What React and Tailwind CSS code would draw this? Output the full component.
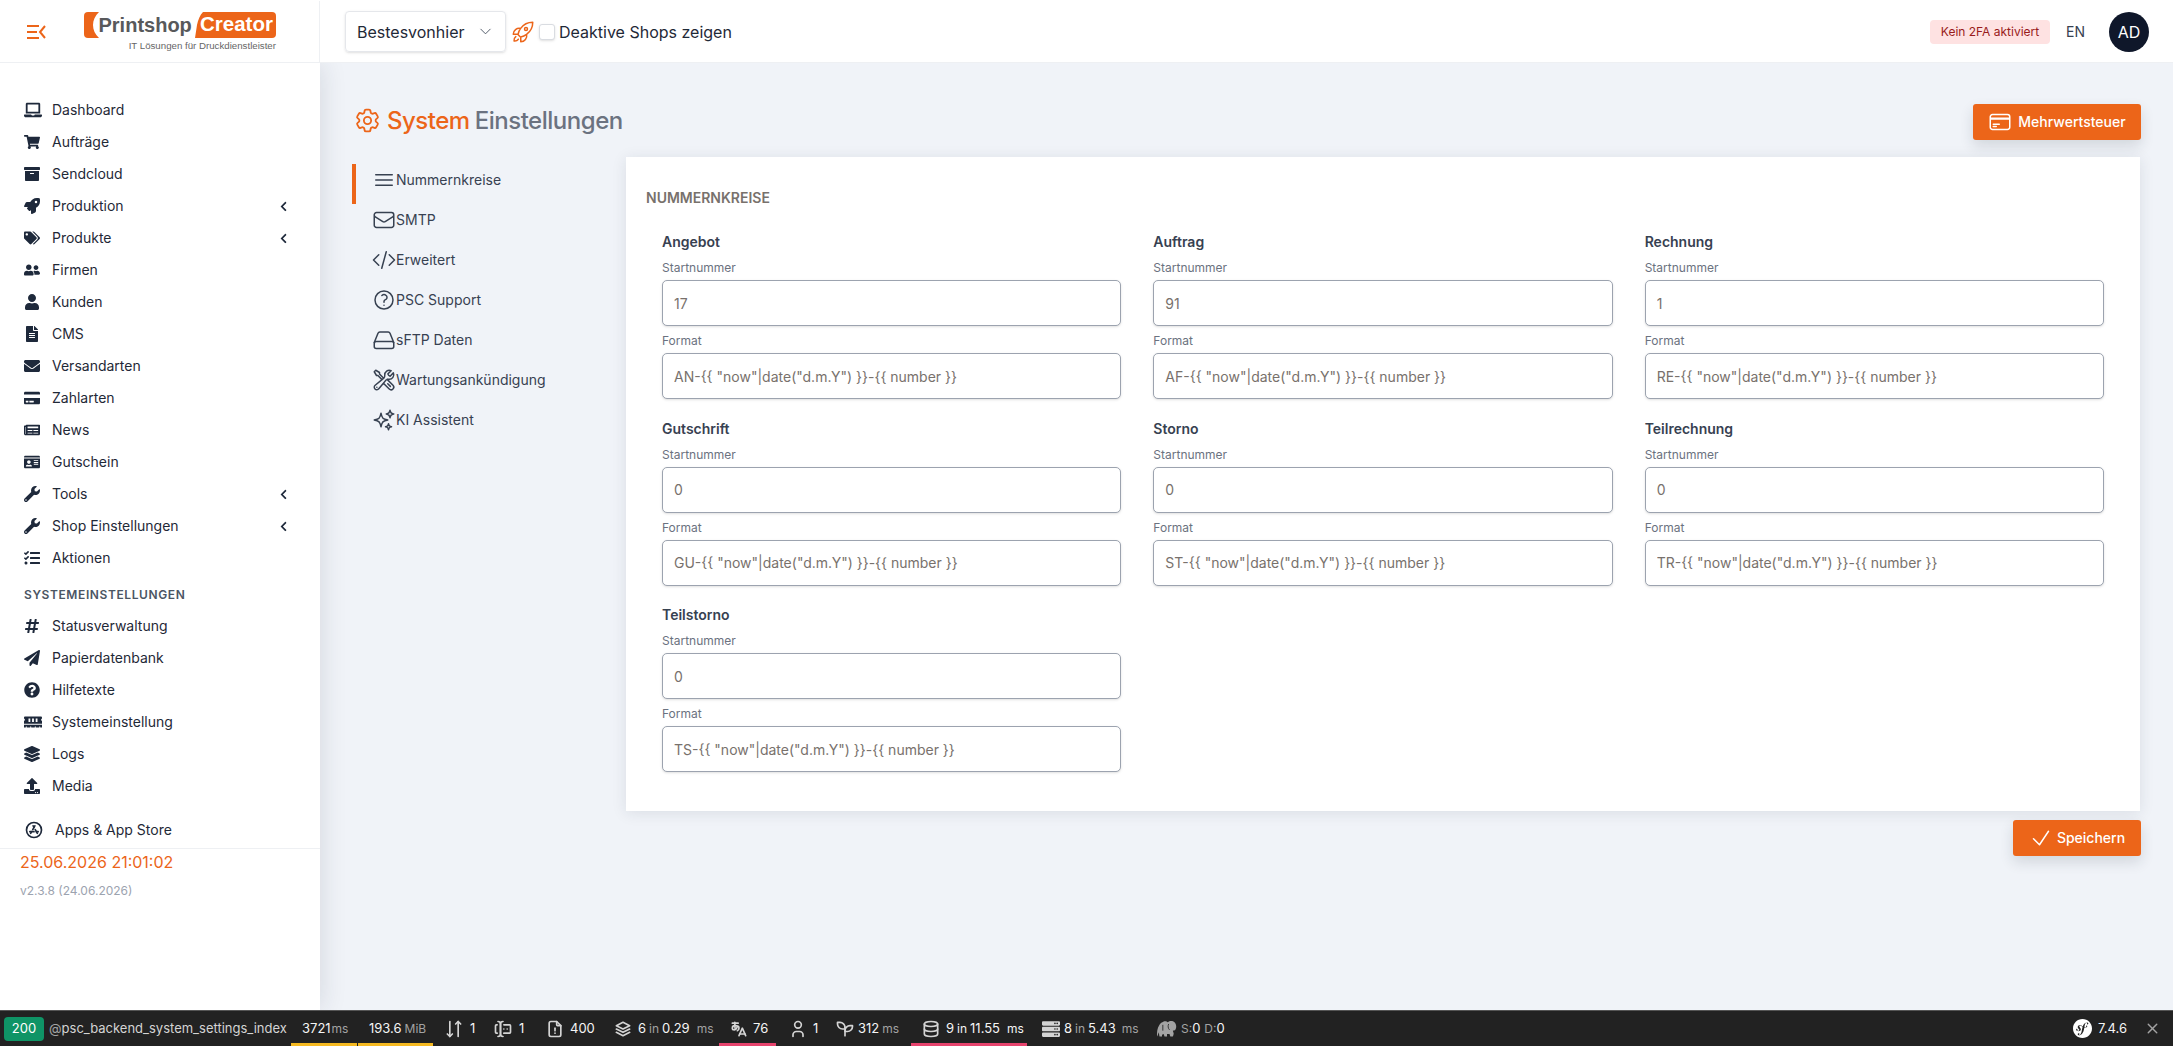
import React from 'react';
import {
  FaLaptop, FaShoppingCart, FaArchive, FaRocket, FaTags, FaUserFriends, FaUser, FaFileAlt, FaEnvelope,
  FaCreditCard, FaNewspaper, FaIdCard, FaWrench, FaTasks, FaHashtag, FaPaperPlane, FaQuestionCircle,
  FaMemory, FaLayerGroup, FaUpload, FaChevronLeft, FaServer,
} from 'react-icons/fa';
import {
  HiOutlineBars3, HiOutlineEnvelope, HiOutlineCodeBracket, HiOutlineQuestionMarkCircle,
  HiOutlineWrenchScrewdriver, HiOutlineSparkles, HiOutlineCog6Tooth, HiOutlineRocketLaunch,
  HiOutlineCreditCard, HiOutlineCheck, HiOutlineChevronDown,
} from 'react-icons/hi2';
import {
  TbBrandAppstore, TbArrowsDownUp, TbForms, TbFileAlert, TbStack2, TbLanguageHiragana, TbUser,
  TbSeeding, TbDatabase, TbX,
} from 'react-icons/tb';
import { SiSymfony } from 'react-icons/si';

const menu = [
  { icon: FaLaptop, label: 'Dashboard', size: 18 },
  { icon: FaShoppingCart, label: 'Aufträge' },
  { icon: FaArchive, label: 'Sendcloud' },
  { icon: FaRocket, label: 'Produktion', sub: true },
  { icon: FaTags, label: 'Produkte', sub: true },
  { icon: FaUserFriends, label: 'Firmen' },
  { icon: FaUser, label: 'Kunden' },
  { icon: FaFileAlt, label: 'CMS' },
  { icon: FaEnvelope, label: 'Versandarten' },
  { icon: FaCreditCard, label: 'Zahlarten' },
  { icon: FaNewspaper, label: 'News' },
  { icon: FaIdCard, label: 'Gutschein' },
  { icon: FaWrench, label: 'Tools', sub: true },
  { icon: FaWrench, label: 'Shop Einstellungen', sub: true },
  { icon: FaTasks, label: 'Aktionen' },
];

const systemMenu = [
  { icon: FaHashtag, label: 'Statusverwaltung' },
  { icon: FaPaperPlane, label: 'Papierdatenbank' },
  { icon: FaQuestionCircle, label: 'Hilfetexte' },
  { icon: FaMemory, label: 'Systemeinstellung', size: 18 },
  { icon: FaLayerGroup, label: 'Logs' },
  { icon: FaUpload, label: 'Media' },
];

const DriveIcon = (props) => (
  <svg viewBox="0 0 24 24" fill="none" stroke="currentColor" strokeWidth="1.5" strokeLinejoin="round" strokeLinecap="round" {...props}>
    <path d="M2.25 14.5 6 5.2A2 2 0 0 1 7.9 4h8.2A2 2 0 0 1 18 5.2l3.75 9.3" />
    <rect x="2.25" y="13.5" width="19.5" height="7" rx="2" />
  </svg>
);

const tabs = [
  { icon: HiOutlineBars3, label: 'Nummernkreise', active: true },
  { icon: HiOutlineEnvelope, label: 'SMTP' },
  { icon: HiOutlineCodeBracket, label: 'Erweitert' },
  { icon: HiOutlineQuestionMarkCircle, label: 'PSC Support' },
  { icon: DriveIcon, label: 'sFTP Daten' },
  { icon: HiOutlineWrenchScrewdriver, label: 'Wartungsankündigung' },
  { icon: HiOutlineSparkles, label: 'KI Assistent' },
];

const circles = [
  { title: 'Angebot', start: '17', prefix: 'AN' },
  { title: 'Auftrag', start: '91', prefix: 'AF' },
  { title: 'Rechnung', start: '1', prefix: 'RE' },
  { title: 'Gutschrift', start: '0', prefix: 'GU' },
  { title: 'Storno', start: '0', prefix: 'ST' },
  { title: 'Teilrechnung', start: '0', prefix: 'TR' },
  { title: 'Teilstorno', start: '0', prefix: 'TS' },
];

const MenuToggle = () => (
  <svg viewBox="0 0 19 14" className="h-[14px] w-[19px] text-[#ec6519]" fill="none" stroke="currentColor" strokeWidth="2">
    <path d="M0 1h12M0 7h10M0 13h12M18 1l-5 6 5 6" />
  </svg>
);

const Logo = () => (
  <div className="ml-[38px] flex w-[192px] flex-col pt-px">
    <svg viewBox="0 0 192 26" className="h-[26px] w-[192px]">
      <rect width="192" height="26" rx="4" fill="#ec6519" />
      <path d="M15 0h104c-3 3-5 8-6 13l-2 13H15c-4-4-6-8-6-13s2-9 6-13z" fill="#fff" />
      <text x="14.5" y="19.5" fontFamily="Liberation Sans, sans-serif" fontWeight="700" fontSize="20" fill="#58595b">Printshop</text>
      <text x="116" y="19" fontFamily="Liberation Sans, sans-serif" fontWeight="700" fontSize="20.5" fill="#fff">Creator</text>
    </svg>
    <span className="mt-[1px] text-right font-['Liberation_Sans',sans-serif] text-[9.7px] leading-[13px] text-[#666]">IT Lösungen für Druckdienstleister</span>
  </div>
);

const Header = () => (
  <header className="relative z-20 flex h-[63px] shrink-0 items-center border-b border-[#eef0f3] bg-white pt-px">
    <div className="flex h-full w-[320px] shrink-0 items-center border-r border-[#eef0f3] pl-[27px]">
      <MenuToggle />
      <Logo />
    </div>
    <div className="ml-[25px] flex h-[41px] w-[161px] items-center justify-between rounded border border-[#e5e7eb] pl-[11px] pr-3 text-base text-[#1f2937] shadow-sm">
      Bestesvonhier
      <HiOutlineChevronDown className="text-[#4b5563]" size={15} />
    </div>
    <HiOutlineRocketLaunch className="ml-[5px] text-[#ec6519]" size={24} />
    <span className="ml-[4px] h-4 w-4 rounded-[3px] border border-[#d9dce1] bg-white shadow-sm" />
    <span className="ml-1 text-base text-[#1f2937]">Deaktive Shops zeigen</span>
    <div className="ml-auto flex items-center pr-6">
      <span className="flex h-[24px] w-[120px] items-center justify-center rounded bg-[#fee2e2] text-xs text-[#991b1b]">Kein 2FA aktiviert</span>
      <span className="ml-4 text-sm text-[#374151]">EN</span>
      <span className="ml-6 flex h-10 w-10 items-center justify-center rounded-full bg-[#0f172a] text-base text-white">AD</span>
    </div>
  </header>
);

const MenuRow = ({ icon: Icon, label, sub, size = 16 }) => (
  <div className="flex h-8 items-center pl-6 pr-[31px] text-sm text-[#1f2937]">
    <span className="flex w-7 shrink-0 items-center">
      <Icon size={size} className="text-[#1e293b]" />
    </span>
    {label}
    {sub && <FaChevronLeft size={11} className="ml-auto text-[#1e293b]" />}
  </div>
);

const Sidebar = () => (
  <aside className="relative z-10 flex w-[320px] shrink-0 flex-col bg-white pt-[31px] shadow-[2px_0_24px_rgba(30,41,59,0.12)]">
    {menu.map((item) => <MenuRow key={item.label} {...item} />)}
    <div className="flex h-9 items-center pl-6 pt-[5px] text-xs font-semibold uppercase tracking-wider text-[#4b5563]">Systemeinstellungen</div>
    {systemMenu.map((item) => <MenuRow key={item.label} {...item} />)}
    <div className="mt-3 flex h-8 items-center pl-6 text-sm text-[#1f2937]">
      <TbBrandAppstore size={20} className="mr-[11px] text-[#1e293b]" />
      Apps &amp; App Store
    </div>
    <div className="mt-[2px] border-t border-[#eef0f3] pl-5">
      <div className="mt-[1px] text-base leading-6 text-[#ec6519]">25.06.2026 21:01:02</div>
      <div className="mt-[9px] text-xs text-[#9ca3af]">v2.3.8 (24.06.2026)</div>
    </div>
  </aside>
);

const Field = ({ label, value }) => (
  <div className="flex flex-col">
    <label className="mb-1 text-xs leading-4 text-[#6b7280]">{label}</label>
    <input
      readOnly
      value={value}
      className="h-[46px] w-full rounded-[5px] border border-[#9ca3af] bg-white px-[11px] text-sm text-[#78716c] shadow-sm outline-none"
    />
  </div>
);

const CircleGroup = ({ title, start, prefix }) => (
  <div className="flex flex-col">
    <h3 className="mb-2 text-sm font-semibold leading-5 text-[#374151]">{title}</h3>
    <Field label="Startnummer" value={start} />
    <div className="mt-[7px]">
      <Field label="Format" value={`${prefix}-{{ "now"|date("d.m.Y") }}-{{ number }}`} />
    </div>
  </div>
);

const OrangeButton = ({ icon: Icon, size, gap, className, children }) => (
  <button className={`flex h-9 items-center justify-center rounded-[3px] bg-[#ec6519] text-sm font-medium text-white shadow-[0_6px_14px_rgba(30,41,59,0.14)] ${className}`}>
    <Icon size={size} className={gap} />
    {children}
  </button>
);

const Main = () => (
  <main className="flex min-w-0 flex-1 flex-col bg-[#f0f3f8] pl-8 pr-8 pt-[41px]">
    <div className="mb-[17px] flex h-9 items-center justify-between">
      <h1 className="flex items-center pb-[3px] text-2xl font-medium tracking-[-0.02em]">
        <HiOutlineCog6Tooth size={29} className="ml-px mr-[5px] text-[#ec6519]" />
        <span className="text-[#ec6519]">System</span>
        <span className="ml-[5px] text-[#6b7280]">Einstellungen</span>
      </h1>
      <OrangeButton icon={HiOutlineCreditCard} size={24} gap="mr-[6px]" className="w-[168px]">Mehrwertsteuer</OrangeButton>
    </div>
    <div className="flex">
      <nav className="w-[274px] shrink-0 pt-[7px]">
        {tabs.map(({ icon: Icon, label, active }) => (
          <div key={label} className={`flex h-10 items-center border-l-4 pb-2 pl-4 text-sm text-[#374151] ${active ? 'border-[#ec6519]' : 'border-transparent'}`}>
            <Icon className="h-6 w-6 shrink-0" />
            {label}
          </div>
        ))}
      </nav>
      <section className="mr-px min-w-0 flex-1 bg-white px-5 pb-[39px] pt-[31px] shadow-[0_2px_14px_rgba(30,41,59,0.1)]">
        <h2 className="mb-6 text-sm font-semibold uppercase leading-5 text-[#78716c]">Nummernkreise</h2>
        <div className="grid grid-cols-3 gap-x-8 gap-y-[19.5px] px-4">
          {circles.map((c) => <CircleGroup key={c.title} {...c} />)}
        </div>
      </section>
    </div>
    <div className="mt-[9px] flex justify-end">
      <OrangeButton icon={HiOutlineCheck} size={24} gap="mr-[4px]" className="w-[128px]">Speichern</OrangeButton>
    </div>
  </main>
);

const Unit = ({ children, className = '' }) => (
  <span className={`text-xs text-[#a3a3a3] ${className}`}>{children}</span>
);

const ElephantIcon = () => (
  <svg viewBox="0 0 24 20" className="h-5 w-5 text-[#a3a3a3]" fill="currentColor">
    <path d="M8 1c2-1 4 0 5 1 2-2 6-2 8 0 2 2 3 6 1 9-1 1-2 1-3 1l1 3c0 2-1 4-1 4h-3l-1-3h-3v3H9l-1-3-2 1v2H3l-1-5c-1 3-1 4-2 5 0-5 0-10 3-14 1-2 3-3 5-4z" />
    <path d="M14 4c-1 2-1 5 1 7M7 5v7" fill="none" stroke="#222" strokeWidth="1" />
  </svg>
);

const Block = ({ className = '', line, children }) => (
  <div className={`relative flex h-full shrink-0 items-center ${className}`}>
    {children}
    {line && <span className={`absolute bottom-0 left-0 right-0 h-[3px] ${line}`} />}
  </div>
);

const Toolbar = () => (
  <footer className="z-20 flex h-9 shrink-0 items-center border-t border-[#555] bg-[#222] text-[13px] text-[#f5f5f5]">
    <span className="ml-1 flex h-6 w-10 items-center justify-center rounded bg-[#0f9466] text-white">200</span>
    <span className="ml-[5px] w-[242px] shrink-0 whitespace-nowrap text-[13px] text-[#d4d4d4]"><span className="text-[#a3a3a3]">@</span>psc_backend_system_settings_index</span>
    <Block className="w-[66px] pl-[11px]" line="bg-[#f5b921]">3721<Unit className="ml-px">ms</Unit></Block>
    <Block className="ml-px w-[75px] pl-[11px]" line="bg-[#f5b921]">193.6<Unit className="ml-[3px]">MiB</Unit></Block>
    <Block className="ml-[2px] w-[49px] pl-[9px]"><TbArrowsDownUp size={20} className="mr-[6px] text-[#d4d4d4]" />1</Block>
    <Block className="w-[52px] pl-[9px]"><TbForms size={20} className="mr-[6px] text-[#d4d4d4]" />1</Block>
    <Block className="w-[67px] pl-[9px]"><TbFileAlert size={20} className="mr-[5px] text-[#d4d4d4]" />400</Block>
    <Block className="w-[116px] pl-[10px]"><TbStack2 size={20} className="mr-[5px] text-[#d4d4d4]" />6<Unit className="mx-[3px]">in</Unit>0.29<Unit className="ml-[7px]">ms</Unit></Block>
    <Block className="w-[57px] pl-[10px]" line="bg-[#e6436d]"><TbLanguageHiragana size={20} className="mr-[4px] text-[#d4d4d4]" />76</Block>
    <Block className="ml-[12px] w-[44px]"><TbUser size={20} className="mr-[5px] text-[#d4d4d4]" />1</Block>
    <Block className="ml-[3px] w-[76px]"><TbSeeding size={20} className="mr-[3px] text-[#d4d4d4]" />312<Unit className="ml-[3px]">ms</Unit></Block>
    <Block className="w-[116px] pl-[10px]" line="bg-[#e6436d]"><TbDatabase size={20} className="mr-[5px] text-[#d4d4d4]" />9<Unit className="mx-[3px] text-[#f5f5f5]">in</Unit>11.55<Unit className="ml-[7px] text-[#f5f5f5]">ms</Unit></Block>
    <Block className="ml-[4px] w-[115px] pl-[11px]"><FaServer size={18} className="mr-[4px] text-[#d4d4d4]" />8<Unit className="mx-[3px]">in</Unit>5.43<Unit className="ml-[6px]">ms</Unit></Block>
    <Block className="pl-[11px]"><ElephantIcon /><Unit className="ml-[4px]">S:</Unit>0<Unit className="ml-[4px]">D:</Unit>0</Block>
    <div className="ml-auto flex items-center pr-3">
      <SiSymfony size={19} className="text-white" />
      <span className="ml-[6px]">7.4.6</span>
      <TbX size={17} className="ml-[17px] text-[#a3a3a3]" />
    </div>
  </footer>
);

export default function App() {
  return (
    <div className="flex h-screen w-full flex-col overflow-hidden bg-[#f0f3f8] font-['Inter',sans-serif]">
      <Header />
      <div className="flex min-h-0 flex-1">
        <Sidebar />
        <Main />
      </div>
      <Toolbar />
    </div>
  );
}
